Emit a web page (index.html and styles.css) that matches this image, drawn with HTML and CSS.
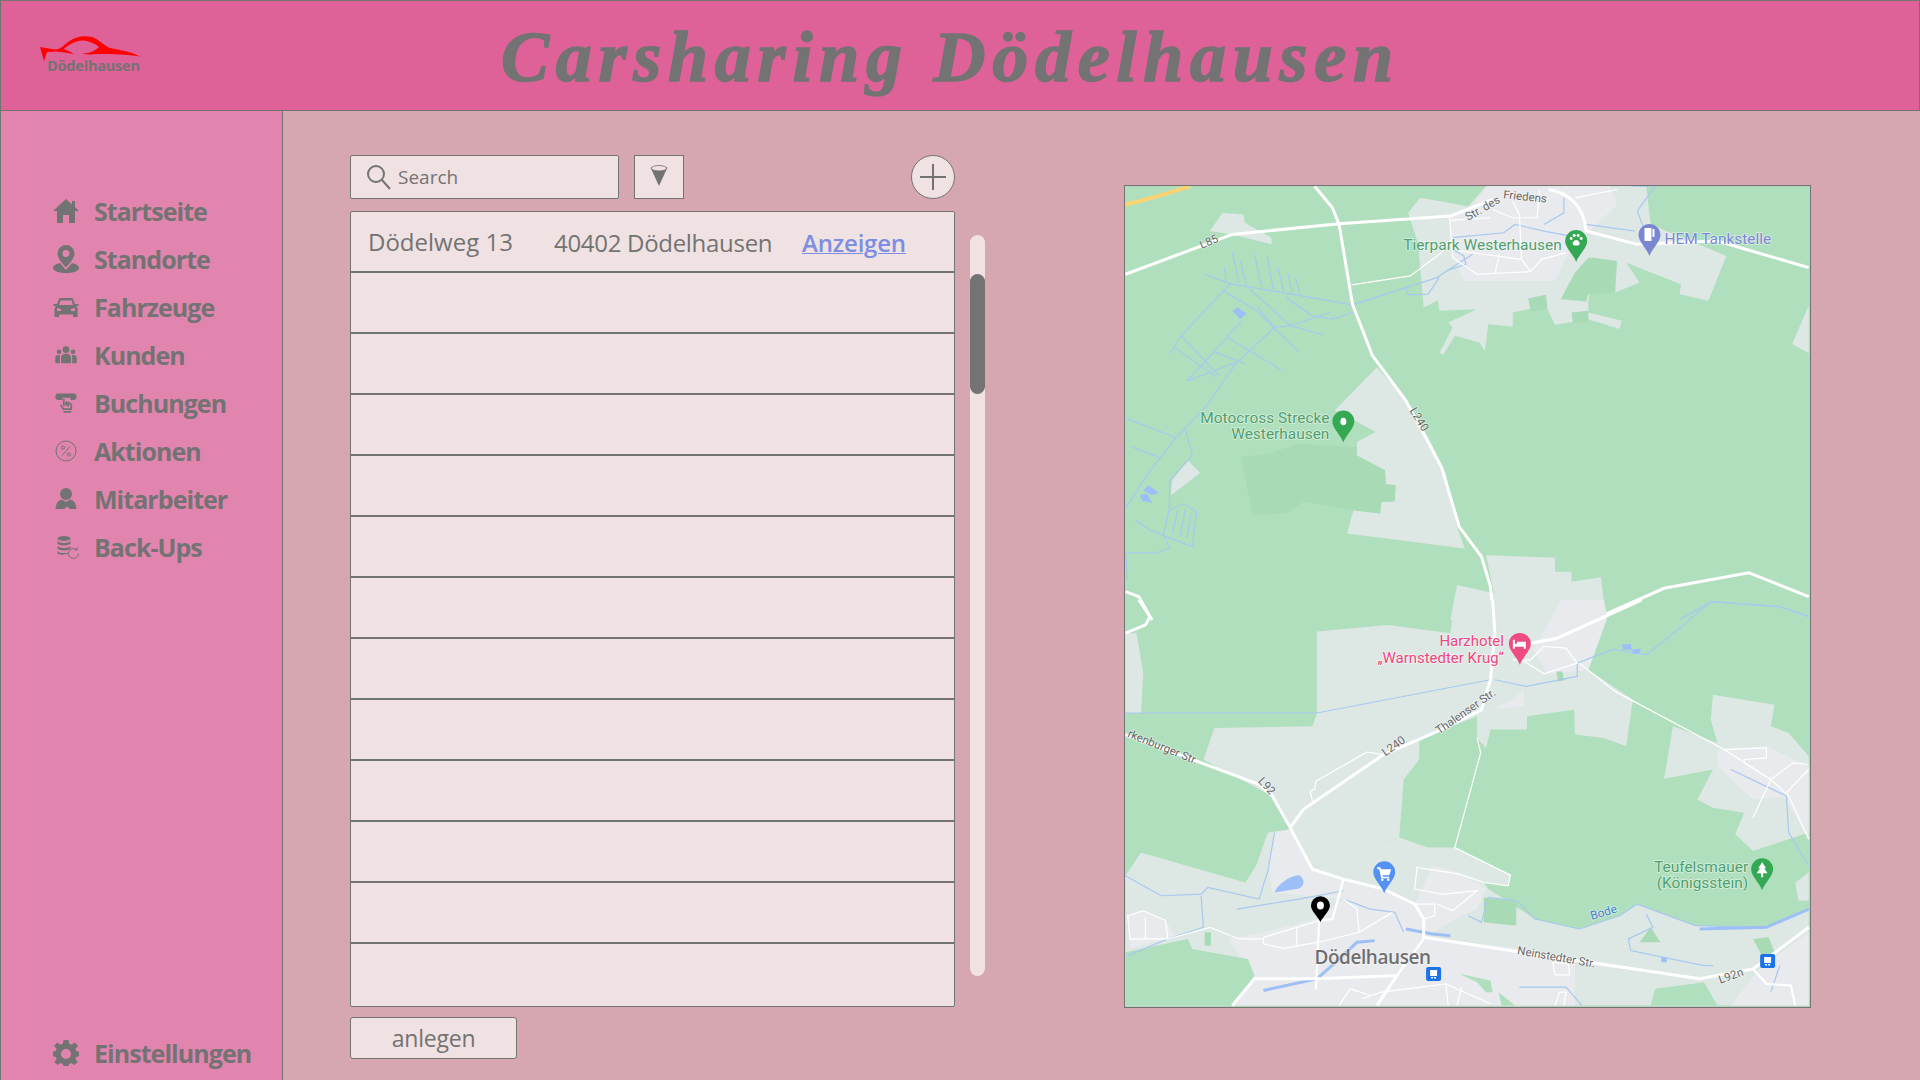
FILE: index.html
```html
<!DOCTYPE html>
<html lang="de">
<head>
    <meta charset="UTF-8">
    <title>Carsharing Dödelhausen</title>
    <link rel="stylesheet" href="styles.css">
</head>
<body>
    <header class="top-bar">
        <div class="logo">
            <svg class="logo-car" viewBox="40 36 100 25"><path d="M40 47 L55 49.500 C60 49.500 63 46 68 42 C75 36.500 84 35 92 37 C99 39.500 103 45 110 48 C120 50 132 52 140 56.500 C128 54.500 112 54 98 54 C92 54.500 87 54.500 82 54 L90 52.500 C94 51 97 49 99 47 C94 43 88 40.500 82 40.500 C75 41 69 44.500 64 49 C67 50.500 71 52 74 54 C68 53 62 52 56 51.500 L47 52 L44 61 Z"/></svg>
            <span class="logo-text">Dödelhausen</span>
        </div>
        <h1 class="page-title">Carsharing Dödelhausen</h1>
    </header>

    <div class="content">
        <aside class="sidebar">
            <nav class="nav-list">
                <a class="nav-item"><svg class="nav-icon" viewBox="0 0 28 28"><path d="M14 2 L1 14 H5 V26 H11 V18 H17 V26 H23 V14 H27 L23 10.300 V4 H20 V7.500 Z"/></svg>Startseite</a>
                <a class="nav-item"><svg class="nav-icon" viewBox="0 0 28 28"><path d="M14 0 A8.500 8.500 0 0 0 5.500 8.500 C5.500 13 10 18 14 22.500 C18 18 22.500 13 22.500 8.500 A8.500 8.500 0 0 0 14 0 Z M14 5 A3.500 3.500 0 1 1 14 12 A3.500 3.500 0 1 1 14 5 Z" fill-rule="evenodd"/><path d="M8 18 C4 19 1 20.500 1 23 C1 26 7 28 14 28 C21 28 27 26 27 23 C27 20.500 24 19 20 18 L14 25 Z"/></svg>Standorte</a>
                <a class="nav-item"><svg class="nav-icon" viewBox="0 0 28 28"><path d="M7.500 5 H20.500 L23 11 H26.500 V13 H24 L25.500 15 V24 H21 V21.500 H7 V24 H2.500 V15 L4 13 H1.500 V11 H5 Z M8.500 7.500 L7 12 H21 L19.500 7.500 Z M5 15 V18 H9 V16 Z M23 15 L19 16 V18 H23 Z" fill-rule="evenodd"/></svg>Fahrzeuge</a>
                <a class="nav-item"><svg class="nav-icon" viewBox="-3 -3 34 34"><circle cx="14" cy="7.500" r="4"/><circle cx="5.500" cy="10" r="2.800"/><circle cx="22.500" cy="10" r="2.800"/><path d="M8 24 V17 C8 14 10.500 12.500 14 12.500 C17.500 12.500 20 14 20 17 V24 Z"/><path d="M6.500 24 H2 C1 24 1 23 1 22 V17 C1 14.500 3 13.500 6.800 14 C6.500 15 6.500 16 6.500 17 Z"/><path d="M21.500 24 H26 C27 24 27 23 27 22 V17 C27 14.500 25 13.500 21.200 14 C21.500 15 21.500 16 21.500 17 Z"/></svg>Kunden</a>
                <a class="nav-item"><svg class="nav-icon" viewBox="-2 -2 32 32"><path d="M5 3 H23 C27 3 27.500 10 23 10.500 H19 V8 L10 8 V10.500 H5 C0.500 10 1 3 5 3 Z"/><path class="nav-line" d="M19 7 L21 5.500 M11.500 9 V17 M14 13 V17 M16.500 14 V18 M8 16 L11 21 H20 V16 C20 14.500 17 14 14 13 M11 24 H20"/></svg>Buchungen</a>
                <a class="nav-item"><svg class="nav-icon" viewBox="0 0 28 28"><circle class="nav-line thin" cx="14" cy="14" r="10"/><path class="nav-line thin" d="M18 9.500 L10 18.500"/><circle class="nav-line thin" cx="11" cy="10.500" r="1.600"/><circle class="nav-line thin" cx="17" cy="17.500" r="1.600"/></svg>Aktionen</a>
                <a class="nav-item"><svg class="nav-icon" viewBox="0 0 28 28"><circle cx="14" cy="9" r="6"/><path d="M3.500 24 C4 18 6 15.500 10 14.500 L14 17 L18 14.500 C22 15.500 24 18 24.500 24 H18 L15 21.500 L12 24 Z"/></svg>Mitarbeiter</a>
                <a class="nav-item"><svg class="nav-icon" viewBox="-2 0 28 28"><ellipse cx="10" cy="5.500" rx="6.500" ry="2.500"/><path d="M3.500 8 C5 10.500 15 10.500 16.500 8 V10.500 C15 13 5 13 3.500 10.500 Z M3.500 13 C5 15.500 15 15.500 16.500 13 V15.500 C15 18 5 18 3.500 15.500 Z M3.500 18 C5 20.500 12 20.500 14 19.500 V20.500 C11 22 5 22 3.500 20.500 Z"/><path class="nav-line thin" d="M24.500 20.500 A5 5 0 1 1 22.500 16.500 M23 14.500 V17 H20.500"/></svg>Back-Ups</a>
            </nav>
            <a class="nav-item settings"><svg class="nav-icon" viewBox="0 0 28 28"><path d="M11.500 2 H16.500 L17.200 5.800 L19.600 6.800 L22.800 4.600 L26 8 L23.400 11 L24.300 13 L27 13.800 V18.200 L24.300 19 L23.400 21 L25.600 24 L22.400 27 L19.400 25 L17.200 26 L16.500 28 H11.500 L10.800 26 L8.600 25 L5.600 27 L2.400 24 L4.600 21 L3.700 19 L1 18.200 V13.800 L3.700 13 L4.600 11 L2 8 L5.200 4.600 L8.400 6.800 L10.800 5.800 Z M14 11 A5 5 0 1 0 14 21 A5 5 0 1 0 14 11 Z" fill-rule="evenodd" transform="translate(0 -1)"/></svg>Einstellungen</a>
        </aside>

        <main class="main">
            <section class="list-col">
                <div class="toolbar">
                    <div class="search">
                        <svg class="search-icon" viewBox="0 0 26 26"><circle cx="11" cy="10" r="8"/><path d="M17 16 L25 25"/></svg>
                        <span>Search</span>
                    </div>
                    <button class="filter-btn"><svg viewBox="0 0 22 26"><path class="cone" d="M1 4 L11 26 L21 4 Z"/><ellipse class="cone-top" cx="11" cy="5" rx="9" ry="3.200"/></svg></button>
                    <button class="add-btn"><svg viewBox="0 0 28 28"><path d="M14 1 V27 M1 14 H27"/></svg></button>
                </div>
                <div class="list-wrap">
                    <div class="list">
                        <div class="row first">
                            <span class="street">Dödelweg 13</span>
                            <span class="city">40402 Dödelhausen</span>
                            <a class="show-link">Anzeigen</a>
                        </div>
                        <div class="row"></div>
                        <div class="row"></div>
                        <div class="row"></div>
                        <div class="row"></div>
                        <div class="row"></div>
                        <div class="row"></div>
                        <div class="row"></div>
                        <div class="row"></div>
                        <div class="row"></div>
                        <div class="row"></div>
                        <div class="row"></div>
                        <div class="row last"></div>
                    </div>
                    <div class="scrollbar"><div class="thumb"></div></div>
                </div>
                <button class="create-btn">anlegen</button>
            </section>

            <div class="map">
                <svg viewBox="1124 185 687 823">
                    <rect class="m-base" x="1124" y="185" width="687" height="823"/>

                    <!-- north half -->
                    <g transform="translate(1120 180) scale(.4464 .3333)">
                        <path class="m-fringe" d="M200 150 L228 95 L275 100 L278 125 L338 170 L338 190 L250 160 Z"/>
                        <path class="m-fringe" d="M645 95 L672 50 L780 75 L820 15 L1180 15 L1190 130 L1360 225 L1320 360 L1255 340 L1258 310 L1135 245 L1165 305 L1110 335 L1115 240 L1060 230 L1050 365 L1050 395 L1125 420 L1120 445 L1050 415 L975 432 L958 385 L915 385 L880 395 L880 438 L825 430 L818 510 L805 485 L750 465 L725 520 L715 518 L745 440 L735 425 L800 385 L715 390 L712 358 L680 380 L668 190 Z"/>
                        <path class="m-town" d="M780 85 L825 15 L1100 15 L1115 70 L1045 160 L1000 230 L975 300 L770 300 L745 230 L738 110 Z"/>
                        <path class="m-forest" d="M988 355 L1020 275 L1050 230 L1060 230 L1112 240 L1110 335 L1050 340 L1045 362 Z M915 352 L955 342 L958 385 L920 392 Z M1012 395 L1050 390 L1050 425 L1015 425 Z"/>
                        <path class="m-fringe" d="M1545 375 L1508 490 L1545 518 Z M150 840 L178 878 L112 945 L115 900 Z"/>
                        <path class="m-fringe" d="M575 560 L640 660 L690 770 L730 880 L755 1040 L772 1105 L508 1060 L522 990 L582 1000 L585 965 L615 963 L617 915 L595 912 L593 870 L530 825 L530 785 L572 755 L525 720 L480 690 Z"/>
                        <path class="m-forest" d="M270 830 L330 820 L400 790 L530 800 L530 825 L593 870 L595 912 L617 915 L615 963 L585 965 L582 1000 L522 990 L410 965 L370 1000 L295 1005 Z"/>
                        <path class="m-fringe" d="M820 1125 L975 1133 L975 1175 L1012 1175 L1012 1205 L1078 1192 L1090 1320 L740 1320 L755 1215 L838 1240 Z"/>

                        <path class="m-water" d="M188 280 L245 308 L405 345 L520 372 L640 320 L710 290 L745 258 L790 220 M640 320 L645 342 L690 340 L715 290 M250 215 L265 305 M268 240 L282 310 M300 220 L316 318 M328 225 L342 325 M352 258 L366 335 M375 278 L385 340 M392 290 L403 345 M232 258 L236 300 M245 308 L135 465 L110 518 M230 330 L305 390 L400 515 M290 325 L380 435 L455 462 M370 350 L430 405 L475 415 L520 395 M135 465 L220 585 M120 500 L215 590 M212 515 L280 550 M240 470 L360 568 M305 375 L345 440 L380 435 L470 395 M345 440 L260 545 L150 600 M270 420 L205 520 L148 600 M260 545 L190 680 L125 770 L60 880 L10 985 M15 715 L125 772 M25 800 L85 830 M145 745 L160 825 L110 900 L108 990 L95 1065 L65 1050 L30 1018 M95 1065 L160 1100 L170 995 L140 970 L108 990 M128 990 L115 1060 M145 985 L132 1070 M158 1000 L148 1075 M95 1065 L110 1105 L80 1118 L10 1118 L15 1200 M1045 130 L1155 150 M1150 15 L1200 15 L1160 90 L1185 180 M745 170 L860 155 L885 130 L950 150 L1010 165 M950 130 L995 95 L995 50 M745 205 L770 225 L775 250 L730 270 M1255 1320 L1325 1265 L1480 1280 L1545 1310"/>
                        <path class="m-water-fill" d="M250 390 L262 380 L282 398 L268 415 Z M50 930 L62 915 L85 938 L70 945 Z M42 945 L58 940 L70 968 L48 962 Z"/>

                        <path class="m-road" d="M10 280 L250 160 L490 128 L740 105 L835 55"/>
                        <path class="m-road" d="M960 25 C1010 35 1040 80 1045 150 L1160 190 L1340 180 L1545 260"/>
                        <path class="m-road" d="M435 15 L475 80 L490 130 L520 370 L565 525 L640 660 L720 860 L760 1040 L810 1130 L830 1220 L838 1320"/>
                        <path class="m-road" d="M10 1235 L40 1250 L65 1310 L70 1320"/>
                        <path class="m-road" d="M1060 1320 L1220 1225 L1410 1178 L1545 1250"/>
                        <path class="m-street" d="M518 312 L650 285 L720 215 L745 170 M738 110 L745 230 L800 280 L920 272 L945 235 L1000 215 M880 60 L895 100 L900 235 L920 272 M835 85 L880 110 L935 110 L940 25 M850 220 L840 280 M760 210 L900 235 M1020 50 L1115 25 M740 118 L830 110 M1040 135 L1045 150"/>
                        <path class="m-highway" d="M10 70 C60 55 110 35 155 15"/>
                    </g>

                    <!-- south half -->
                    <g transform="translate(1120 600) scale(.4464 .3333)">
                        <path class="m-fringe" d="M10 100 L35 100 L50 220 L45 340 L10 340 Z"/>
                        <path class="m-fringe" d="M440 95 L600 75 L740 100 L750 0 L1085 0 L1092 55 L1050 210 L1150 300 L1135 440 L1085 415 L1020 405 L1018 330 L912 350 L912 390 L830 390 L820 445 L800 415 L800 350 L720 392 L670 420 L670 480 L635 540 L625 715 L430 810 L380 685 L340 590 L185 480 L210 385 L430 380 L440 340 Z"/>
                        <path class="m-town" d="M880 300 L905 270 L905 320 L835 328 Z M990 0 L1085 0 L1092 55 L1050 210 L960 225 L925 150 Z"/>
                        <path class="m-fringe" d="M1330 285 L1468 315 L1460 380 L1500 400 L1545 470 L1545 700 L1420 755 L1380 705 L1400 640 L1330 625 L1295 600 L1330 510 L1220 538 L1240 380 L1340 430 L1325 360 Z"/>
                        <path class="m-town" d="M1340 450 L1450 440 L1545 500 L1545 720 L1490 590 L1420 600 L1340 500 Z"/>
                        <path class="m-fringe" d="M10 830 L45 760 L200 820 L280 850 L305 795 L330 700 L380 690 L430 810 L625 715 L690 745 L750 745 L875 828 L870 860 L815 850 L825 870 L930 960 L1030 990 L1120 950 L1160 915 L1290 980 L1450 985 L1545 930 L1545 1220 L10 1220 Z"/>
                        <path class="m-fringe" d="M1515 850 L1545 820 L1545 905 L1522 905 Z"/>
                        <path class="m-forest" d="M420 825 L458 825 L455 880 L418 878 Z M815 895 L888 905 L888 980 L815 970 Z M188 1000 L202 1000 L202 1040 L188 1040 Z M1165 1030 L1190 985 L1212 1030 Z M1420 1020 L1455 1015 L1470 1065 L1440 1070 Z M978 215 L992 215 L995 242 L982 245 Z"/>
                        <path class="m-town" d="M330 800 L345 700 L380 690 L430 810 L590 870 L660 915 L700 800 L760 820 L820 870 L800 930 L750 960 L680 1015 L900 1050 L1020 1090 L1020 1220 L250 1220 L300 1130 L240 1020 L320 1000 L440 960 L500 900 L340 880 Z"/>
                        <path class="m-town" d="M15 950 L50 935 L105 975 L120 1010 L20 1050 Z M1370 1220 L1440 1100 L1545 1000 L1545 1220 Z"/>
                        <path class="m-base-fill" d="M10 1060 L150 1020 L160 1050 L240 1070 L285 1080 L300 1130 L250 1220 L10 1220 Z M1190 1220 L1200 1170 L1310 1150 L1340 1220 Z M760 1125 L830 1145 L835 1180 L820 1180 L800 1150 Z M848 1180 L885 1220 L855 1220 Z"/>

                        <path class="m-water" d="M840 240 L910 260 L1025 230 L1025 190 L1105 148 L1180 165 L1260 80 L1325 5 L1480 20 L1545 50 M10 340 L440 340 L830 240 M10 830 L90 890 L180 885 L195 865 L310 900 L330 815 L345 700 M180 890 L185 985 L105 1020 L15 1070 M260 930 L400 900 L500 875 M500 900 L560 930 L615 940 L635 1000 M780 950 L810 970 L825 895 L890 905 L930 960 L1030 990 L1120 950 L1160 915 L1290 980 L1450 985 L1545 930 M1180 945 L1195 985 L1140 1020 L1145 1055 L1310 1100 L1330 1100 M1370 510 L1495 590 L1500 700 L1545 800 M895 1165 L1000 1165 L1035 1220 M1480 1100 L1460 1180"/>
                        <path class="m-water-thick" d="M640 990 L700 1005 L740 1010 M470 1105 L530 1030 L570 1025 M320 1175 L440 1140 L470 1105 M1300 990 L1450 985 L1545 930"/>
                        <path class="m-water-fill" d="M345 880 C350 860 375 830 400 828 C415 840 412 860 400 868 Z M1125 135 L1145 132 L1148 150 L1128 150 Z M1148 150 L1168 146 L1165 162 L1150 162 Z M1214 1076 L1226 1076 L1226 1090 L1214 1090 Z"/>

                        <path class="m-road" d="M10 405 L310 555 L340 590 L380 685 L430 810 L500 840 L590 870 L660 915 L680 960 L680 1015 L900 1060 L1300 1140 L1420 1110 L1545 985"/>
                        <path class="m-road" d="M380 685 L410 630 L590 465 L720 390 L810 330 L830 240 L840 100 L835 0"/>
                        <path class="m-road" d="M1170 0 L980 115 L920 130"/>
                        <path class="m-road" d="M40 0 L65 50 L55 75 L10 100"/>
                        <path class="m-road" d="M250 1220 L300 1140 L440 1140 L620 1130 L575 1220"/>
                        <path class="m-road-small" d="M500 840 L475 960 L445 965 L438 1170 M620 1130 L680 1020 M1420 1110 L1450 1155 L1505 1160 L1515 1220"/>
                        <path class="m-street" d="M1030 190 L1110 275 L1355 450 L1460 540 L1500 590 M800 415 L808 460 L750 745 L875 828 L870 860 L815 850 L760 825 L665 805 L660 870 L720 885 L800 875 L745 935 L710 915 M590 465 L552 458 L438 545 L435 570 L425 575 L430 605 M1355 450 L1450 445 L1450 475 L1400 480 L1400 490 L1460 540 L1420 655 M1460 540 L1510 490 L1545 495 M1500 590 L1545 720 M1545 510 L1495 580 M320 1015 L445 965 L475 960 M320 1015 L320 1035 L365 1048 L440 1030 M395 985 L395 1040 M105 1020 L200 985 L265 1020 L320 1020 M15 950 L50 935 L100 965 L105 1020 L20 1020 Z M55 955 L55 1020 M500 900 L530 930 L535 1000 L445 1030 M610 940 L535 1000 M660 915 L705 915 L705 950 L680 960 M540 1200 L585 1180 L730 1155 L830 1215 M730 1155 L735 1220 M765 1165 L755 1220 M490 1220 L515 1170 L560 1190 M915 110 L900 180 L950 222 L1025 190 L1000 145 L950 140 L920 180 L880 180 M975 1220 L985 1180 L1000 1180 L995 1220 M970 1090 L1005 1095 L1008 1128 L975 1128 Z"/>
                    </g>

                    <!-- map labels -->
                    <text class="l-road" transform="translate(1468 220) rotate(-30)">Str. des</text>
                    <text class="l-road" transform="translate(1503 197) rotate(6)">Friedens</text>
                    <text class="l-road" transform="translate(1201 248) rotate(-24)">L85</text>
                    <text class="l-road" transform="translate(1409 410) rotate(58)">L240</text>
                    <text class="l-road" transform="translate(1126 737) rotate(22)">rkenburger Str.</text>
                    <text class="l-road" transform="translate(1257 782) rotate(48)">L92</text>
                    <text class="l-road" transform="translate(1385 757) rotate(-35)">L240</text>
                    <text class="l-road" transform="translate(1439 735) rotate(-35)">Thalenser Str.</text>
                    <text class="l-road" transform="translate(1517 955) rotate(10)">Neinstedter Str.</text>
                    <text class="l-road" transform="translate(1721 985) rotate(-20)">L92n</text>
                    <text class="l-bode" transform="translate(1592 921) rotate(-17)">Bode</text>

                    <text class="l-green end" x="1562" y="249">Tierpark Westerhausen</text>
                    <text class="l-fuel" x="1665" y="243">HEM Tankstelle</text>
                    <text class="l-green end" x="1329" y="422">Motocross Strecke</text>
                    <text class="l-green end" x="1329" y="439">Westerhausen</text>
                    <text class="l-pink end" x="1504" y="646">Harzhotel</text>
                    <text class="l-pink end" x="1504" y="663">„Warnstedter Krug“</text>
                    <text class="l-green end" x="1749" y="873">Teufelsmauer</text>
                    <text class="l-green end" x="1749" y="889">(Königsstein)</text>
                    <text class="l-town" x="1314" y="965">Dödelhausen</text>

                    <!-- pins -->
                    <g transform="translate(1576.500 229)">
                        <path class="pin-green" d="M0 32 C-3 24 -11 18 -11 11 A11 11 0 1 1 11 11 C11 18 3 24 0 32 Z"/>
                        <path class="pin-glyph" d="M-3.500 13 C-2 9 2 9 3.500 13 C4 16 1 15.500 0 15.500 C-1 15.500 -4 16 -3.500 13 Z"/>
                        <circle class="pin-glyph" cx="-5" cy="8.500" r="1.500"/><circle class="pin-glyph" cx="-2" cy="5.500" r="1.500"/><circle class="pin-glyph" cx="2" cy="5.500" r="1.500"/><circle class="pin-glyph" cx="5" cy="8.500" r="1.500"/>
                    </g>
                    <g transform="translate(1650 223)">
                        <path class="pin-fuel" d="M0 32 C-3 24 -11 18 -11 11 A11 11 0 1 1 11 11 C11 18 3 24 0 32 Z"/>
                        <path class="pin-glyph" d="M-5 4 H2 V17 H-5 Z M3 5 H5 V13 H3 Z"/>
                    </g>
                    <g transform="translate(1343 410)">
                        <path class="pin-green" d="M0 32 C-3 24 -11 18 -11 11 A11 11 0 1 1 11 11 C11 18 3 24 0 32 Z"/>
                        <ellipse class="pin-glyph" cx="0" cy="11" rx="3" ry="3.800"/>
                    </g>
                    <g transform="translate(1520 633)">
                        <path class="pin-pink" d="M0 32 C-3 24 -11 18 -11 11 A11 11 0 1 1 11 11 C11 18 3 24 0 32 Z"/>
                        <path class="pin-glyph" d="M-7 7 H-5 V11 H-3 V9 H6 V16 H4 V14 H-5 V16 H-7 Z"/>
                    </g>
                    <g transform="translate(1384 862)">
                        <path class="pin-cart" d="M0 32 C-3 24 -11 18 -11 11 A11 11 0 1 1 11 11 C11 18 3 24 0 32 Z"/>
                        <path class="pin-glyph" d="M-7 6 H-4 L-3 8 H7 L5 14 H-2 L-1 15.500 H5 V17 H-3 L-5 8 H-7 Z"/>
                        <circle class="pin-glyph" cx="-2" cy="18.500" r="1.300"/><circle class="pin-glyph" cx="4" cy="18.500" r="1.300"/>
                    </g>
                    <g transform="translate(1763 859)">
                        <path class="pin-green" d="M0 32 C-3 24 -11 18 -11 11 A11 11 0 1 1 11 11 C11 18 3 24 0 32 Z"/>
                        <path class="pin-glyph" d="M0 4 L4 10 H2 L5.500 15 H1 V19 H-1 V15 H-5.500 L-2 10 H-4 Z"/>
                    </g>
                    <g transform="translate(1320 897)">
                        <path class="pin-black" d="M0 26 C-3 20 -9.500 15 -9.500 9.500 A9.500 9.500 0 1 1 9.500 9.500 C9.500 15 3 20 0 26 Z"/>
                        <ellipse class="pin-glyph" cx="0" cy="9.500" rx="3.500" ry="4"/>
                    </g>
                    <g transform="translate(1426 968)">
                        <rect class="pin-rail" width="15" height="14" rx="2"/>
                        <path class="pin-glyph" d="M4 3 H11 V9 H4 Z M5 10 H7 V11.500 H5 Z M8 10 H10 V11.500 H8 Z"/>
                    </g>
                    <g transform="translate(1761 955)">
                        <rect class="pin-rail" width="15" height="14" rx="2"/>
                        <path class="pin-glyph" d="M4 3 H11 V9 H4 Z M5 10 H7 V11.500 H5 Z M8 10 H10 V11.500 H8 Z"/>
                    </g>
                </svg>
            </div>
        </main>
    </div>
</body>
</html>
```

FILE: styles.css
```css
* {
    box-sizing: border-box;
}

body {
    margin: 0;
    width: 1920px;
    height: 1080px;
    overflow: hidden;
    font-family: "Open Sans", "Liberation Sans", sans-serif;
    color: #737373;
    background-color: #d6a6b1;
}

.top-bar {
    height: 111px;
    display: flex;
    align-items: flex-start;
    background-color: #de6298;
    border: 1px solid #737373;
}

.logo {
    width: 500px;
    padding: 35px 0 0 39px;
}

.logo-car {
    display: block;
    width: 100px;
    height: 25px;
    fill: #ff0000;
}

.logo-text {
    display: block;
    margin: -3px 0 0 7px;
    font-size: 14.5px;
    line-height: 16px;
    font-weight: 700;
    letter-spacing: -0.2px;
}

.page-title {
    margin: 14px 0 0 0;
    font-family: "Liberation Serif", serif;
    font-size: 72px;
    line-height: 84px;
    font-weight: 700;
    font-style: italic;
    letter-spacing: 6.75px;
    -webkit-text-stroke: 1.5px #737373;
}

.content {
    display: flex;
    height: 969px;
}

.sidebar {
    width: 283px;
    display: flex;
    flex-direction: column;
    padding: 76px 0 3px 51px;
    background-color: #e285ae;
    border-left: 1px solid #737373;
    border-right: 1px solid #737373;
}

.nav-list {
    display: flex;
    flex-direction: column;
    gap: 0;
}

.nav-item {
    height: 48px;
    display: flex;
    align-items: center;
    gap: 14px;
    font-size: 25px;
    font-weight: 700;
    letter-spacing: -0.95px;
}

.nav-icon {
    width: 28px;
    height: 28px;
    fill: #737373;
    flex-shrink: 0;
}

.nav-line {
    fill: none;
    stroke: #737373;
    stroke-width: 2;
}

.nav-line.thin {
    stroke-width: 1;
}

.settings {
    margin-top: auto;
}

.main {
    flex: 1;
    display: flex;
    padding: 44px 0 0 67px;
}

.list-col {
    width: 635px;
}

.toolbar {
    width: 605px;
    height: 44px;
    display: flex;
    gap: 15px;
}

.search {
    width: 269px;
    display: flex;
    align-items: center;
    gap: 7px;
    padding-left: 14px;
    font-size: 19px;
    background-color: #f0e2e2;
    border: 1px solid #737373;
    border-radius: 2px;
}

.search-icon {
    width: 26px;
    height: 26px;
    fill: none;
    stroke: #737373;
    stroke-width: 2;
}

.filter-btn {
    width: 50px;
    padding: 0;
    background-color: #f0e2e2;
    border: 1px solid #737373;
    display: flex;
    align-items: flex-start;
    justify-content: center;
}

.filter-btn svg {
    width: 22px;
    height: 22px;
    margin-top: 8px;
}

.cone {
    fill: #737373;
}

.cone-top {
    fill: #f0e2e2;
    stroke: #737373;
    stroke-width: 1;
}

.add-btn {
    width: 44px;
    height: 44px;
    margin-left: auto;
    padding: 0;
    border-radius: 50%;
    background-color: #f0e2e2;
    border: 1px solid #737373;
    display: flex;
    align-items: center;
    justify-content: center;
}

.add-btn svg {
    width: 28px;
    height: 28px;
    fill: none;
    stroke: #737373;
    stroke-width: 2;
}

.list-wrap {
    display: flex;
    margin-top: 12px;
}

.list {
    width: 605px;
    height: 796px;
    overflow: hidden;
    background-color: #f0e2e2;
    border: 1px solid #737373;
    border-radius: 2px;
}

.row {
    height: 61px;
    border-bottom: 2px solid #737373;
}

.row.first {
    display: flex;
    align-items: center;
    padding: 2px 0 0 17px;
    font-size: 24px;
}

.row.last {
    border-bottom: none;
}

.street {
    width: 186px;
    margin-top: -3px;
}

.city {
    width: 248px;
    letter-spacing: -0.3px;
}

.show-link {
    font-weight: 600;
    color: #7b8ee0;
    text-decoration: underline;
    text-decoration-thickness: 1px;
    letter-spacing: -0.2px;
}

.scrollbar {
    width: 15px;
    height: 741px;
    margin: 24px 0 0 15px;
    padding-top: 39px;
    background-color: #f0e2e2;
    border-radius: 8px;
}

.thumb {
    height: 120px;
    background-color: #737373;
    border-radius: 8px;
}

.create-btn {
    display: block;
    width: 167px;
    height: 42px;
    margin-top: 10px;
    padding: 0;
    font-family: "Open Sans", sans-serif;
    font-size: 23px;
    font-weight: 500;
    letter-spacing: -0.2px;
    color: #737373;
    background-color: #f0e2e2;
    border: 1px solid #737373;
    border-radius: 3px;
}

.map {
    width: 687px;
    height: 823px;
    margin: 30px 0 0 139px;
    border: 1px solid #737373;
}

.map svg {
    display: block;
    width: 685px;
    height: 821px;
}

.map path {
    vector-effect: non-scaling-stroke;
}

.m-base, .m-base-fill {
    fill: #b0dfbd;
}

.m-fringe {
    fill: #dde8e4;
}

.m-town {
    fill: #e8eaed;
}

.m-forest {
    fill: #a8dab6;
}

.m-water {
    fill: none;
    stroke: #a8c8f0;
    stroke-width: 1.2;
}

.m-water-thick {
    fill: none;
    stroke: #9dbff5;
    stroke-width: 3;
}

.m-water-fill {
    fill: #9dbff8;
}

.m-road {
    fill: none;
    stroke: #fff;
    stroke-width: 3;
}

.m-road-small {
    fill: none;
    stroke: #fff;
    stroke-width: 2.2;
}

.m-street {
    fill: none;
    stroke: #fff;
    stroke-width: 1.2;
}

.m-highway {
    fill: none;
    stroke: #fdd272;
    stroke-width: 4;
}

.map text {
    font-family: Roboto, sans-serif;
    paint-order: stroke;
    stroke: rgba(255, 255, 255, 0.55);
    stroke-width: 1.5px;
}

.end {
    text-anchor: end;
}

.l-road {
    font-size: 11.5px;
    fill: #666;
}

.l-bode {
    font-size: 12px;
    fill: #3f7fd0;
}

.l-green {
    font-size: 15.5px;
    fill: #4f9e6c;
}

.l-fuel {
    font-size: 15.5px;
    fill: #7c86d8;
}

.l-pink {
    font-size: 15px;
    fill: #f0457f;
}

.map .l-town {
    font-family: "Open Sans", sans-serif;
    font-size: 19px;
    font-weight: 600;
    fill: #6e6e6e;
    letter-spacing: -0.4px;
}

.pin-green {
    fill: #34a853;
}

.pin-fuel {
    fill: #7b86d1;
}

.pin-pink {
    fill: #ee4b80;
}

.pin-cart {
    fill: #5491f5;
}

.pin-black {
    fill: #000;
}

.pin-rail {
    fill: #1a73e8;
}

.pin-glyph {
    fill: #fff;
}
```
